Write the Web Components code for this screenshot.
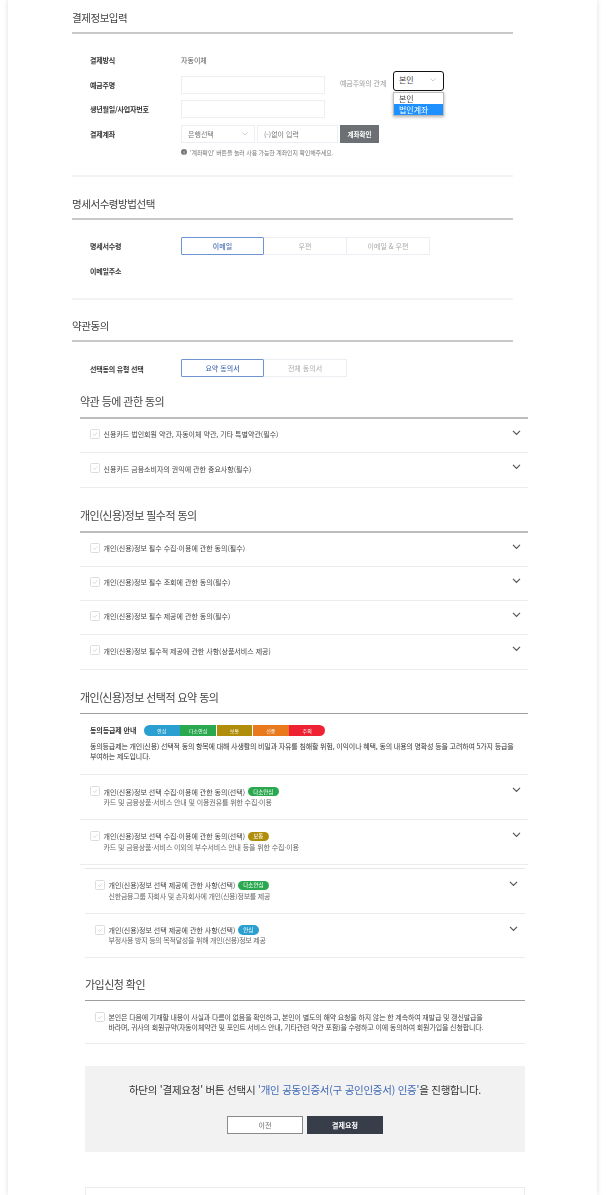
<!DOCTYPE html>
<html lang="ko">
<head>
<meta charset="utf-8">
<title>결제정보입력</title>
<style>
html, body { margin: 0; padding: 0; height: 1195px; overflow: hidden; background: #fff; }
body { font-family: "Noto Sans CJK KR", "Noto Sans", sans-serif; color: #333; font-size: 7px; }
.main { display: block; margin-left: 64px; width: 441px; }
.terms { display: block; margin-left: 72px; width: 448px; }
.inner { display: block; margin-left: 77px; width: 440px; --sub-spacing: -.24px; }
.gap4 { margin-top: 4px; }
.gap8 { margin-top: 8px; }
.gap9 { margin-top: 9px; }
.gap11 { margin-top: 11px; }
.gap10 { margin-top: 10px; }
.gap3 { margin-top: 3.5px; }
</style>
</head>
<body>
<pay-card>
	<div class="main">
		<section-head title="결제정보입력"></section-head>
		<pay-form style="padding-top:14px">
			<form-row label="결제방식"><span style="font-size:7px;color:#555">자동이체</span></form-row>
			<form-row label="예금주명">
				<text-box width="144"></text-box>
				<span style="margin-left:15px;color:#999;font-size:7px;width:53px;margin-top:-3px;letter-spacing:-.1px">예금주와의 관계</span>
				<relation-select></relation-select>
			</form-row>
			<form-row label="생년월일/사업자번호"><text-box width="144"></text-box></form-row>
			<form-row label="결제계좌">
				<text-box width="74" text="은행선택" arrow></text-box>
				<text-box width="81" text="(-)없이 입력" style="margin-left:2px"></text-box>
				<gray-button style="margin-left:2px">계좌확인</gray-button>
			</form-row>
			<hint-line>'계좌확인' 버튼을 눌러 사용 가능한 계좌인지 확인해주세요.</hint-line>
		</pay-form>
		<thin-rule style="margin-top:17px"></thin-rule>
	</div>
	<div class="main gap9">
		<section-head title="명세서수령방법선택"></section-head>
		<pay-form style="padding-top:14px">
			<form-row label="명세서수령"><seg-toggle options="이메일|우편|이메일 &amp; 우편"></seg-toggle></form-row>
			<form-row label="이메일주소"></form-row>
		</pay-form>
		<thin-rule style="margin-top:15px"></thin-rule>
	</div>
	<div class="main gap8">
		<section-head title="약관동의"></section-head>
		<pay-form style="padding-top:14.5px">
			<form-row label="선택동의 유형 선택"><seg-toggle options="요약 동의서|전체 동의서"></seg-toggle></form-row>
		</pay-form>
	</div>
	<div class="terms gap4">
		<sub-head title="약관 등에 관한 동의"></sub-head>
		<agree-item text="신용카드 법인회원 약관, 자동이체 약관, 기타 특별약관(필수)"></agree-item>
		<agree-item text="신용카드 금융소비자의 권익에 관한 중요사항(필수)"></agree-item>
	</div>
	<div class="terms gap11">
		<sub-head title="개인(신용)정보 필수적 동의"></sub-head>
		<agree-item text="개인(신용)정보 필수 수집·이용에 관한 동의(필수)"></agree-item>
		<agree-item text="개인(신용)정보 필수 조회에 관한 동의(필수)"></agree-item>
		<agree-item text="개인(신용)정보 필수 제공에 관한 동의(필수)"></agree-item>
		<agree-item text="개인(신용)정보 필수적 제공에 관한 사항(상품서비스 제공)"></agree-item>
	</div>
	<div class="terms gap11">
		<sub-head title="개인(신용)정보 선택적 요약 동의" thin></sub-head>
		<grade-guide></grade-guide>
		<agree-item text="개인(신용)정보 선택 수집·이용에 관한 동의(선택)" badge="다소안심" tone="green" sub="카드 및 금융상품·서비스 안내 및 이용권유를 위한 수집·이용"></agree-item>
		<agree-item text="개인(신용)정보 선택 수집·이용에 관한 동의(선택)" badge="보통" tone="olive" sub="카드 및 금융상품·서비스 이외의 부수서비스 안내 등을 위한 수집·이용"></agree-item>
	</div>
	<div class="inner gap3" style="border-top:1px solid #e8e8e8">
		<agree-item text="개인(신용)정보 선택 제공에 관한 사항(선택)" badge="다소안심" tone="green" sub="신한금융그룹 자회사 및 손자회사에 개인(신용)정보를 제공"></agree-item>
		<agree-item text="개인(신용)정보 선택 제공에 관한 사항(선택)" badge="안심" tone="blue" sub="부정사용 방지 등의 목적달성을 위해 개인(신용)정보 제공"></agree-item>
	</div>
	<div class="inner gap10">
		<sub-head title="가입신청 확인" thin></sub-head>
		<confirm-item>본인은 다음에 기재할 내용이 사실과 다름이 없음을 확인하고, 본인이 별도의 해약 요청을 하지 않는 한 계속하여 재발급 및 갱신발급을<br>바라며, 귀사의 회원규약(자동이체약관 및 포인트 서비스 안내, 기타관련 약관 포함)을 수령하고 이에 동의하여 회원가입을 신청합니다.</confirm-item>
		<action-box></action-box>
		<bottom-box></bottom-box>
	</div>
</pay-card>

<script>
const CHECK = `<svg width="10" height="10" viewBox="0 0 10 10" style="display:block"><rect x=".5" y=".5" width="9" height="9" rx="1" fill="#fff" stroke="#ddd"/><path d="M3 5.1l1.5 1.5 2.6-2.9" fill="none" stroke="#ccc" stroke-width=".7"/></svg>`;

class PayCard extends HTMLElement {
	connectedCallback() {
		this.attachShadow({ mode: 'open' });
		this.shadowRoot.innerHTML = `
		<style>
			:host { display: block; width: 589px; height: 1195px; margin-left: 8px; background: #fff; box-shadow: 0 0 5px rgba(0,0,0,.14); overflow: hidden; filter: blur(.3px); }
		</style>
		<slot></slot>`;
	}
}

class SectionHead extends HTMLElement {
	connectedCallback() {
		this.attachShadow({ mode: 'open' });
		this.shadowRoot.innerHTML = `
		<style>
			:host { display: flex; align-items: center; border-bottom: 2px solid #c9c9c9; padding-top: 2px; box-sizing: border-box; height: 34px; }
			span { font-size: 10.5px; color: #444; letter-spacing: -.45px; }
		</style>
		<span>${this.getAttribute('title')}</span>`;
	}
}

class SubHead extends HTMLElement {
	connectedCallback() {
		let thin = this.hasAttribute('thin');
		this.attachShadow({ mode: 'open' });
		this.shadowRoot.innerHTML = `
		<style>
			:host { display: flex; align-items: center; box-sizing: border-box; height: ${thin ? 33 : 34}px; border-bottom: ${thin ? '1px solid #9e9e9e' : '2px solid #bdbdbd'}; }
			span { font-size: 11px; color: #444; letter-spacing: -.55px; }
		</style>
		<span>${this.getAttribute('title')}</span>`;
	}
}

class ThinRule extends HTMLElement {
	connectedCallback() {
		this.attachShadow({ mode: 'open' });
		this.shadowRoot.innerHTML = `<style>:host { display: block; height: 2px; background: #f3f3f3; }</style>`;
	}
}

class PayForm extends HTMLElement {
	connectedCallback() {
		this.attachShadow({ mode: 'open' });
		this.shadowRoot.innerHTML = `<style>:host { display: block; }</style><slot></slot>`;
	}
}

class FormRow extends HTMLElement {
	connectedCallback() {
		this.attachShadow({ mode: 'open' });
		this.shadowRoot.innerHTML = `
		<style>
			:host { display: grid; grid-template-columns: 91px 1fr; align-items: center; height: 24.5px; padding-left: 18px; }
			label { font-size: 7px; font-weight: 700; color: #333; letter-spacing: -.2px; white-space: nowrap; }
			div { display: flex; align-items: center; }
		</style>
		<label>${this.getAttribute('label')}</label>
		<div><slot></slot></div>`;
	}
}

class TextBox extends HTMLElement {
	connectedCallback() {
		let text = this.getAttribute('text') || '';
		let arrow = this.hasAttribute('arrow');
		this.attachShadow({ mode: 'open' });
		this.shadowRoot.innerHTML = `
		<style>
			:host { display: flex; align-items: center; justify-content: space-between; box-sizing: border-box; width: ${this.getAttribute('width')}px; height: 18px; border: 1px solid #eceef4; padding: 0 6px; font-size: 7px; color: #777; background: #fff; }
		</style>
		<span>${text}</span>
		${arrow ? `<svg width="6" height="4" viewBox="0 0 6 4"><path d="M.5.5L3 3 5.5.5" fill="none" stroke="#bbb" stroke-width=".7"/></svg>` : ''}`;
	}
}

class RelationSelect extends HTMLElement {
	connectedCallback() {
		this.attachShadow({ mode: 'open' });
		this.shadowRoot.innerHTML = `
		<style>
			:host { display: block; position: relative; width: 51px; height: 20px; margin-top: -8px; font-size: 8px; color: #444; }
			.box { display: flex; align-items: center; justify-content: space-between; box-sizing: border-box; height: 20px; border: 1.5px solid #111; border-radius: 3px; padding: 0 7px 2px 5px; background: #fff; }
			.menu { position: absolute; left: 0; top: 21px; width: 51px; box-sizing: border-box; border: 1px solid #bbb; background: #fff; box-shadow: 0 1px 3px rgba(0,0,0,.3); line-height: 11px; }
			.menu div { padding: 0 5px; height: 11px; }
			.menu .on { background: #1e90ff; color: #fff; }
		</style>
		<div class="box"><span>본인</span><svg width="6" height="4" viewBox="0 0 6 4"><path d="M.5.5L3 3 5.5.5" fill="none" stroke="#bbb" stroke-width=".7"/></svg></div>
		<div class="menu"><div>본인</div><div class="on">법인계좌</div></div>`;
	}
}

class GrayButton extends HTMLElement {
	connectedCallback() {
		this.attachShadow({ mode: 'open' });
		this.shadowRoot.innerHTML = `
		<style>
			:host { display: flex; align-items: center; justify-content: center; width: 39px; height: 18px; background: #6c6f73; color: #fff; font-size: 6.5px; font-weight: 700; }
		</style>
		<slot></slot>`;
	}
}

class HintLine extends HTMLElement {
	connectedCallback() {
		this.attachShadow({ mode: 'open' });
		this.shadowRoot.innerHTML = `
		<style>
			:host { display: flex; align-items: center; gap: 3px; height: 12px; padding-left: 109px; font-size: 6px; color: #777; letter-spacing: -.13px; }
			i { display: flex; align-items: center; justify-content: center; width: 6px; height: 6px; border-radius: 50%; background: #777; color: #fff; font-style: normal; font-size: 5px; line-height: 1; }
		</style>
		<i>!</i><span><slot></slot></span>`;
	}
}

class SegToggle extends HTMLElement {
	connectedCallback() {
		let items = this.getAttribute('options').split('|');
		this.attachShadow({ mode: 'open' });
		this.shadowRoot.innerHTML = `
		<style>
			:host { display: flex; height: 18px; margin-top: -1px; font-size: 7px; }
			div { display: flex; align-items: center; justify-content: center; box-sizing: border-box; width: 83px; height: 18px; border: 1px solid #eceef4; border-left-width: 0; color: #aaa; }
			div.on { border: 1px solid #6f94d2; border-bottom-width: 1.5px; color: #4a6fb5; border-radius: 1px; font-weight: 500; }
		</style>
		${items.map((t, i) => `<div class="${i == 0 ? 'on' : ''}">${t}</div>`).join('')}`;
	}
}

class AgreeItem extends HTMLElement {
	connectedCallback() {
		let text = this.getAttribute('text');
		let sub = this.getAttribute('sub');
		let badge = this.getAttribute('badge');
		let tone = { green: '#2aa84f', olive: '#b08d0a', blue: '#2a9fd0' }[this.getAttribute('tone')];
		this.attachShadow({ mode: 'open' });
		this.shadowRoot.innerHTML = `
		<style>
			:host { display: flex; align-items: flex-start; box-sizing: border-box; height: ${sub ? 44.6 : 34.3}px; border-bottom: 1px solid #ececec; padding: ${sub ? 11 : 10}px 7px 0 10px; font-size: 7px; color: #444; }
			.check { flex: none; margin-right: 3.5px; }
			.body { flex: 1; }
			.main { display: flex; align-items: center; height: 10.6px; }
			.sub { height: 10.6px; line-height: 10.6px; color: #666; letter-spacing: var(--sub-spacing, -.12px); }
			.badge { display: inline-flex; align-items: center; justify-content: center; height: 9.5px; padding: 0 5.5px; margin-left: 2.5px; border-radius: 5px; background: ${tone}; color: #fff; font-size: 5.5px; }
			svg.chev { flex: none; margin-top: -1px; }
		</style>
		<span class="check">${CHECK}</span>
		<div class="body">
			<div class="main"><span>${text}</span>${badge ? `<span class="badge">${badge}</span>` : ''}</div>
			${sub ? `<div class="sub">${sub}</div>` : ''}
		</div>
		<svg class="chev" width="9" height="9" viewBox="0 0 9 9"><path d="M1 2.8l3.5 3.5L8 2.8" fill="none" stroke="#555" stroke-width="1.2"/></svg>`;
	}
}

class GradeGuide extends HTMLElement {
	connectedCallback() {
		let grades = [['안심', '#2a9fd0'], ['다소안심', '#2aa84f'], ['보통', '#b08d0a'], ['신중', '#e87a1d'], ['주의', '#ee2233']];
		this.attachShadow({ mode: 'open' });
		this.shadowRoot.innerHTML = `
		<style>
			:host { display: block; box-sizing: border-box; height: 61.6px; padding: 11px 10px 0 10px; border-bottom: 1px solid #ececec; font-size: 7px; color: #333; }
			.top { display: flex; align-items: center; height: 11px; }
			b { width: 54px; font-weight: 700; letter-spacing: -.1px; white-space: nowrap; }
			.bar { display: flex; gap: .7px; width: 181px; height: 11px; border-radius: 6px; overflow: hidden; }
			.bar span { flex: 1; display: flex; align-items: center; justify-content: center; color: #fff; font-size: 5px; }
			p { margin: 5px 0 0; line-height: 10.6px; white-space: nowrap; letter-spacing: -.15px; }
		</style>
		<div class="top"><b>동의등급제 안내</b><div class="bar">${grades.map(g => `<span style="background:${g[1]}">${g[0]}</span>`).join('')}</div></div>
		<p>동의등급제는 개인(신용) 선택적 동의 항목에 대해 사생활의 비밀과 자유를 침해할 위험, 이익이나 혜택, 동의 내용의 명확성 등을 고려하여 5가지 등급을<br>부여하는 제도입니다.</p>`;
	}
}

class ConfirmItem extends HTMLElement {
	connectedCallback() {
		this.attachShadow({ mode: 'open' });
		this.shadowRoot.innerHTML = `
		<style>
			:host { display: flex; align-items: flex-start; box-sizing: border-box; height: 42.6px; padding: 10.5px 0 0 10px; border-bottom: 1px solid #ececec; font-size: 7px; line-height: 10.7px; color: #444; white-space: nowrap; letter-spacing: -.15px; }
			span { flex: none; margin-right: 3.5px; }
		</style>
		<span>${CHECK}</span><div><slot></slot></div>`;
	}
}

class ActionBox extends HTMLElement {
	connectedCallback() {
		this.attachShadow({ mode: 'open' });
		this.shadowRoot.innerHTML = `
		<style>
			:host { display: flex; flex-direction: column; align-items: center; box-sizing: border-box; height: 85.7px; margin-top: 22px; padding-top: 16px; background: #f2f2f2; }
			p { margin: 0; height: 16px; line-height: 16px; font-size: 10.5px; color: #333; white-space: nowrap; letter-spacing: -.25px; }
			em { font-style: normal; color: #3f68b4; }
			.btns { display: flex; gap: 4px; margin-top: 18px; }
			.btns div { display: flex; align-items: center; justify-content: center; box-sizing: border-box; width: 76px; height: 18px; font-size: 7px; }
			.prev { background: #fff; border: 1px solid #8a8a8a; color: #666; }
			.next { background: #383d4a; color: #fff; font-weight: 700; }
		</style>
		<p>하단의 '결제요청' 버튼 선택시 <em>'개인 공동인증서(구 공인인증서) 인증'</em>을 진행합니다.</p>
		<div class="btns"><div class="prev">이전</div><div class="next">결제요청</div></div>`;
	}
}

class BottomBox extends HTMLElement {
	connectedCallback() {
		this.attachShadow({ mode: 'open' });
		this.shadowRoot.innerHTML = `<style>:host { display: block; height: 30px; margin-top: 35px; border: 1px solid #ececec; box-sizing: border-box; }</style>`;
	}
}

customElements.define('pay-card', PayCard);
customElements.define('section-head', SectionHead);
customElements.define('sub-head', SubHead);
customElements.define('thin-rule', ThinRule);
customElements.define('pay-form', PayForm);
customElements.define('form-row', FormRow);
customElements.define('text-box', TextBox);
customElements.define('relation-select', RelationSelect);
customElements.define('gray-button', GrayButton);
customElements.define('hint-line', HintLine);
customElements.define('seg-toggle', SegToggle);
customElements.define('agree-item', AgreeItem);
customElements.define('grade-guide', GradeGuide);
customElements.define('confirm-item', ConfirmItem);
customElements.define('action-box', ActionBox);
customElements.define('bottom-box', BottomBox);
</script>
</body>
</html>
